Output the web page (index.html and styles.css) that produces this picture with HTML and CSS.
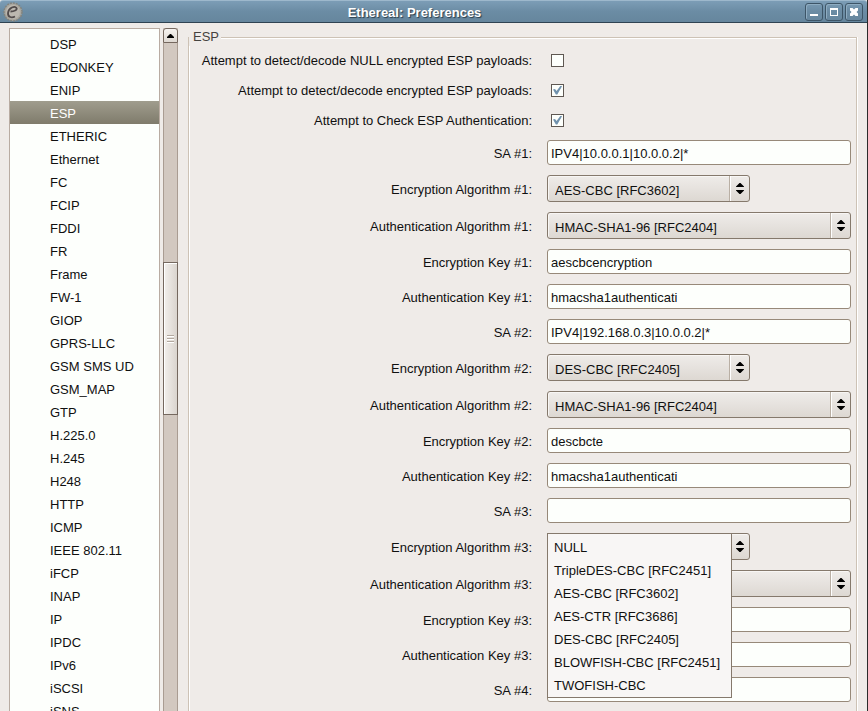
FILE: index.html
```html
<!DOCTYPE html>
<html lang="en">
<head>
<meta charset="utf-8">
<title>Ethereal: Preferences</title>
<link rel="stylesheet" href="styles.css">
</head>
<body>
<svg width="0" height="0" class="defs" aria-hidden="true">
  <symbol id="updown" viewBox="0 0 8 11"><path d="M3.500 0H4.500L8 3.500V4H0V3.500ZM3.500 11H4.500L8 7.500V7H0V7.500Z"/></symbol>
</svg>
<div class="window">
  <header class="titlebar">
    <svg class="app-icon" viewBox="0 0 20 20" aria-hidden="true">
      <circle cx="10" cy="10" r="9" fill="#aaa79f" stroke="#82847f" stroke-width="1.500" stroke-dasharray="2 1"/>
      <circle cx="10" cy="10" r="7" fill="#bcb8b0"/>
      <path d="M7.500 9.500C11 9.500 14.500 8 13.500 6C12 3.500 5.500 5.500 5 11C4.700 15.500 9 16 12 14.500" fill="none" stroke="#514b4b" stroke-width="1.800"/>
    </svg>
    <h1 class="title">Ethereal: Preferences</h1>
    <div class="window-buttons">
      <button type="button" aria-label="Minimize"><svg viewBox="0 0 16 16"><path d="M4 10H12V12H4Z"/></svg></button>
      <button type="button" aria-label="Maximize"><svg viewBox="0 0 16 16"><path fill-rule="evenodd" d="M4 4H12V12H4ZM5 6V11H11V6Z"/></svg></button>
      <button type="button" aria-label="Close"><svg viewBox="0 0 16 16"><path d="M4 4H6.500L8 5.500L9.500 4H12V6.500L10.500 8L12 9.500V12H9.500L8 10.500L6.500 12H4V9.500L5.500 8L4 6.500Z"/></svg></button>
    </div>
  </header>
  <main class="content">
    <ul class="protocols" role="listbox" aria-label="Protocols">
      <li role="option">DSP</li>
      <li role="option">EDONKEY</li>
      <li role="option">ENIP</li>
      <li role="option" aria-selected="true" class="selected">ESP</li>
      <li role="option">ETHERIC</li>
      <li role="option">Ethernet</li>
      <li role="option">FC</li>
      <li role="option">FCIP</li>
      <li role="option">FDDI</li>
      <li role="option">FR</li>
      <li role="option">Frame</li>
      <li role="option">FW-1</li>
      <li role="option">GIOP</li>
      <li role="option">GPRS-LLC</li>
      <li role="option">GSM SMS UD</li>
      <li role="option">GSM_MAP</li>
      <li role="option">GTP</li>
      <li role="option">H.225.0</li>
      <li role="option">H.245</li>
      <li role="option">H248</li>
      <li role="option">HTTP</li>
      <li role="option">ICMP</li>
      <li role="option">IEEE 802.11</li>
      <li role="option">iFCP</li>
      <li role="option">INAP</li>
      <li role="option">IP</li>
      <li role="option">IPDC</li>
      <li role="option">IPv6</li>
      <li role="option">iSCSI</li>
      <li role="option">iSNS</li>
    </ul>
    <div class="scrollbar">
      <button type="button" class="scroll-up" aria-label="Scroll up"><svg viewBox="0 0 7 4"><path d="M3 0H4L7 3V4H0V3Z"/></svg></button>
      <div class="before"></div>
      <div class="thumb"><i></i><i></i><i></i></div>
      <div class="after"></div>
    </div>
    <form class="settings">
      <fieldset>
        <legend>ESP</legend>
        <div class="grid">
          <label for="c1">Attempt to detect/decode NULL encrypted ESP payloads:</label>
          <input type="checkbox" id="c1">
          <label for="c2">Attempt to detect/decode encrypted ESP payloads:</label>
          <input type="checkbox" id="c2" checked>
          <label for="c3">Attempt to Check ESP Authentication:</label>
          <input type="checkbox" id="c3" checked>

          <label for="sa1">SA #1:</label>
          <input type="text" id="sa1" value="IPV4|10.0.0.1|10.0.0.2|*">
          <label for="ea1">Encryption Algorithm #1:</label>
          <div class="select short"><select id="ea1"><option>AES-CBC [RFC3602]</option></select><span class="arrows"><svg><use href="#updown"/></svg></span></div>
          <label for="aa1">Authentication Algorithm #1:</label>
          <div class="select"><select id="aa1"><option>HMAC-SHA1-96 [RFC2404]</option></select><span class="arrows"><svg><use href="#updown"/></svg></span></div>
          <label for="ek1">Encryption Key #1:</label>
          <input type="text" id="ek1" value="aescbcencryption">
          <label for="ak1">Authentication Key #1:</label>
          <input type="text" id="ak1" value="hmacsha1authenticati">

          <label for="sa2">SA #2:</label>
          <input type="text" id="sa2" value="IPV4|192.168.0.3|10.0.0.2|*">
          <label for="ea2">Encryption Algorithm #2:</label>
          <div class="select short"><select id="ea2"><option>DES-CBC [RFC2405]</option></select><span class="arrows"><svg><use href="#updown"/></svg></span></div>
          <label for="aa2">Authentication Algorithm #2:</label>
          <div class="select"><select id="aa2"><option>HMAC-SHA1-96 [RFC2404]</option></select><span class="arrows"><svg><use href="#updown"/></svg></span></div>
          <label for="ek2">Encryption Key #2:</label>
          <input type="text" id="ek2" value="descbcte">
          <label for="ak2">Authentication Key #2:</label>
          <input type="text" id="ak2" value="hmacsha1authenticati">

          <label for="sa3">SA #3:</label>
          <input type="text" id="sa3">
          <label for="ea3">Encryption Algorithm #3:</label>
          <div class="select short">
            <select id="ea3"><option></option></select><span class="arrows"><svg><use href="#updown"/></svg></span>
            <ul class="menu" role="listbox" aria-label="Encryption Algorithm #3">
              <li role="option">NULL</li>
              <li role="option">TripleDES-CBC [RFC2451]</li>
              <li role="option">AES-CBC [RFC3602]</li>
              <li role="option">AES-CTR [RFC3686]</li>
              <li role="option">DES-CBC [RFC2405]</li>
              <li role="option">BLOWFISH-CBC [RFC2451]</li>
              <li role="option">TWOFISH-CBC</li>
            </ul>
          </div>
          <label for="aa3">Authentication Algorithm #3:</label>
          <div class="select"><select id="aa3"><option></option></select><span class="arrows"><svg><use href="#updown"/></svg></span></div>
          <label for="ek3">Encryption Key #3:</label>
          <input type="text" id="ek3">
          <label for="ak3">Authentication Key #3:</label>
          <input type="text" id="ak3">
          <label for="sa4">SA #4:</label>
          <input type="text" id="sa4">
        </div>
      </fieldset>
    </form>
  </main>
</div>
</body>
</html>
```
FILE: styles.css
```css
* { box-sizing: border-box; }

body {
  margin: 0;
  background: #efebe8;
  color: #101010;
  font-family: "Liberation Sans", Arial, sans-serif;
  font-size: 13px;
  line-height: 25px;
}

button, input, select { font: inherit; color: inherit; margin: 0; }
ul { margin: 0; padding: 0; list-style: none; }
.defs { position: absolute; }

.window {
  display: flex;
  flex-direction: column;
  height: 100vh;
  overflow: hidden;
  border-right: 1px solid #2b2b2b;
}

/* Title bar */
.titlebar {
  flex: none;
  display: flex;
  align-items: center;
  height: 23px;
  padding: 0 4px 0 2px;
  background: linear-gradient(#7c9db6, #6b8ca4 50%, #66869d);
  border-top: 1px solid #9db8cc;
  border-bottom: 1px solid #2f4352;
  border-radius: 3px 3px 0 0;
}
.app-icon { width: 22px; height: 20px; }
.title {
  flex: 1;
  margin: 0;
  padding-top: 2px;
  text-align: center;
  color: #fff;
  font-size: 13px;
  font-weight: 700;
  line-height: 18px;
  text-shadow: 1px 1px 1px #2a3d4b;
}
.window-buttons { display: flex; gap: 2px; }
.window-buttons button {
  width: 18px;
  height: 18px;
  padding: 0;
  background: transparent;
  border: 1px solid #3d5567;
  border-radius: 3px;
  box-shadow: inset 1px 1px 0 #8eacc1;
}
.window-buttons svg { display: block; width: 16px; height: 16px; fill: #fff; }

/* Columns */
.content {
  flex: 1;
  min-height: 0;
  display: flex;
  padding: 5px 10px 0 9px;
}

.protocols {
  flex: none;
  width: 151px;
  padding-top: 3px;
  overflow: hidden;
  background: #fdfffc;
  border: 1px solid #b9aca2;
  border-bottom: 0;
}
.protocols li { height: 23px; padding-left: 40px; }
.protocols .selected {
  color: #fff;
  background: linear-gradient(#a09d8e, #7f7b6b);
}

/* Scroll bar */
.scrollbar {
  flex: none;
  display: flex;
  flex-direction: column;
  width: 15px;
  margin-left: 3px;
  background: #d2c8c0;
}
.scroll-up {
  flex: none;
  display: grid;
  place-items: center;
  width: 15px;
  height: 15px;
  padding: 0;
  background: linear-gradient(#f6f3f0, #ded8d2);
  border: 1px solid #75685f;
  border-radius: 3px 3px 0 0;
}
.scroll-up svg { width: 7px; height: 4px; fill: #000; }
.before { flex: 219; border: solid #a99c92; border-width: 0 1px; }
.after { flex: 296; border: solid #a99c92; border-width: 0 1px; }
.thumb {
  flex: 152;
  display: flex;
  flex-direction: column;
  align-items: center;
  justify-content: center;
  gap: 1px;
  background: linear-gradient(to right, #f3f0ed, #dad4ce);
  border: 1px solid #75685f;
  box-shadow: inset 1px 1px 0 #fff;
}
.thumb i { width: 7px; height: 2px; background: #fff; border-top: 1px solid #b3a9a0; }

/* Settings form */
.settings { flex: 1; min-width: 0; margin-left: 10px; }
fieldset {
  min-width: 0;
  min-height: 100vh;
  margin: 0;
  padding: 0;
  border: 1px solid #cdc2b5;
  box-shadow: inset 1px 1px 0 #fff, 1px 0 0 #fff;
}
legend {
  padding: 0 2px 0 4px;
  color: #45423f;
  background: #efebe8;
  line-height: 18px;
}
.grid {
  display: grid;
  grid-template-columns: minmax(0, 338px) minmax(0, 1fr);
  column-gap: 15px;
  row-gap: 10px;
  align-items: center;
  padding: 4px 5px 0;
}
.grid label {
  padding-top: 2px;
  text-align: right;
  white-space: nowrap;
  line-height: 18px;
}

input[type="checkbox"] {
  appearance: none;
  width: 13px;
  height: 13px;
  margin-left: 4px;
  background: #fdfffc;
  border: 1px solid #5f5852;
}
input[type="checkbox"]:checked::before {
  content: "";
  display: block;
  width: 9px;
  height: 9px;
  margin: 1px;
  background: #7192ad;
  clip-path: polygon(0 45%, 22% 38%, 40% 60%, 85% 0, 100% 8%, 48% 100%, 32% 100%);
}
input[type="text"] {
  width: 100%;
  height: 25px;
  padding: 2px 3px 0;
  background: #fdfffc;
  border: 1px solid #978979;
  border-radius: 3px;
  outline: 0;
}

.select { position: relative; height: 27px; }
.select.short { width: 203px; }
.select select {
  appearance: none;
  display: block;
  width: 100%;
  height: 27px;
  padding: 2px 24px 0 7px;
  background: linear-gradient(#efece9, #e6e2de 50%, #ddd8d2);
  border: 1px solid #85796c;
  border-radius: 3px;
  box-shadow: inset 1px 1px 0 #f8f6f4;
  outline: 0;
}
.arrows {
  position: absolute;
  top: 1px;
  right: 1px;
  bottom: 1px;
  width: 20px;
  display: grid;
  place-items: center;
  border-left: 1px solid #b9afa4;
  box-shadow: inset 1px 0 0 #fff;
  pointer-events: none;
}
.arrows svg { width: 8px; height: 11px; fill: #000; }

.menu {
  position: absolute;
  z-index: 1;
  top: 0;
  left: 0;
  width: 185px;
  padding: 1px 0;
  background: #f8f6f5;
  border: 1px solid #85796c;
}
.menu li { height: 23px; padding-left: 6px; white-space: nowrap; }
```
